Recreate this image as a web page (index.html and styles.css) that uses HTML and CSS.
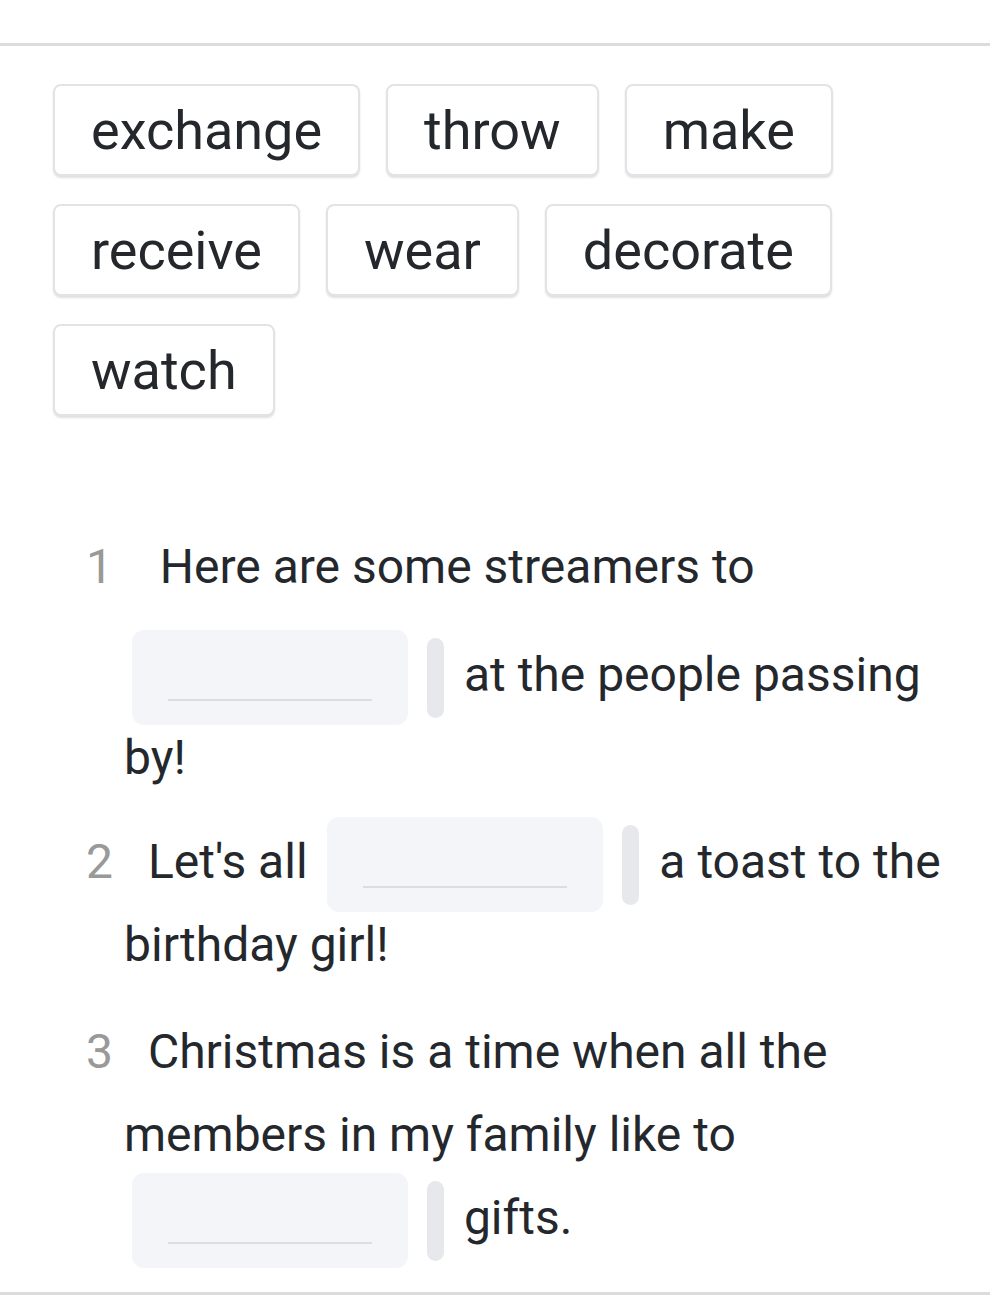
FILE: index.html
```html
<!DOCTYPE html>
<html lang="en">
<head>
    <meta charset="UTF-8">
    <meta name="viewport" content="width=device-width, initial-scale=1.0">
    <title>Fill in the blanks</title>
    <link rel="stylesheet" href="styles.css">
</head>
<body>
    <div class="exercise">
        <!-- Word bank -->
        <div class="word-bank">
            <span class="chip">exchange</span>
            <span class="chip">throw</span>
            <span class="chip">make</span>
            <span class="chip">receive</span>
            <span class="chip">wear</span>
            <span class="chip">decorate</span>
            <span class="chip">watch</span>
        </div>

        <!-- Questions -->
        <div class="questions">
            <p class="question"><span class="num num-gap">1</span> &nbsp;Here are some streamers to <span class="blank-wrap"><span class="blank"><span class="blank-line"></span></span><span class="handle"></span></span> at the people passing by!</p>
            <p class="question"><span class="num">2</span> Let's all <span class="blank-wrap"><span class="blank"><span class="blank-line"></span></span><span class="handle"></span></span> a toast to the birthday girl!</p>
            <p class="question"><span class="num">3</span> Christmas is a time when all the members in my family like to <span class="blank-wrap"><span class="blank"><span class="blank-line"></span></span><span class="handle"></span></span> gifts.</p>
        </div>
    </div>
</body>
</html>
```

FILE: styles.css
```css
* {
    margin: 0;
    padding: 0;
    box-sizing: border-box;
}

body {
    font-family: Roboto, 'Noto Sans', Arial, sans-serif;
    background-color: #fff;
    color: #24282d;
    padding-top: 43px;
    width: 990px;
    height: 1303px;
    overflow: hidden;
}

.exercise {
    border-top: 3px solid #dcdcdc;
    border-bottom: 3px solid #dcdcdc;
}

/* Word bank */
.word-bank {
    display: flex;
    flex-wrap: wrap;
    gap: 28px 26px;
    padding: 38px 140px 0 53px;
}

.chip {
    display: inline-flex;
    align-items: center;
    height: 92px;
    padding: 0 36px;
    border: 2px solid #e2e3e6;
    border-radius: 8px;
    box-shadow: 0 2px 2px rgba(0, 0, 0, 0.12);
    font-size: 54px;
    background-color: #fff;
}

/* Questions */
.questions {
    margin-top: 109px;
    padding: 0 40px 33px 124px;
}

.question {
    font-size: 48px;
    line-height: 83px;
    text-indent: -38px;
    margin-bottom: 21px;
}

.question:last-child {
    padding-top: 3px;
    margin-bottom: 0;
}

.num {
    color: #999;
    margin-right: 23px;
}

.num-gap {
    display: inline-block;
    padding-bottom: 25px;
    text-indent: 0;
}

.blank-wrap {
    display: inline-flex;
    align-items: center;
    gap: 19px;
    vertical-align: middle;
    margin: -16px 8px -15px;
    text-indent: 0;
}

.blank {
    display: flex;
    align-items: flex-end;
    justify-content: center;
    width: 276px;
    height: 95px;
    padding-bottom: 24px;
    background-color: #f4f5f9;
    border-radius: 12px;
}

.blank-line {
    width: 204px;
    height: 2px;
    background-color: #dcdde2;
}

.handle {
    width: 17px;
    height: 80px;
    background-color: #e7e8eb;
    border-radius: 9px;
}
```
